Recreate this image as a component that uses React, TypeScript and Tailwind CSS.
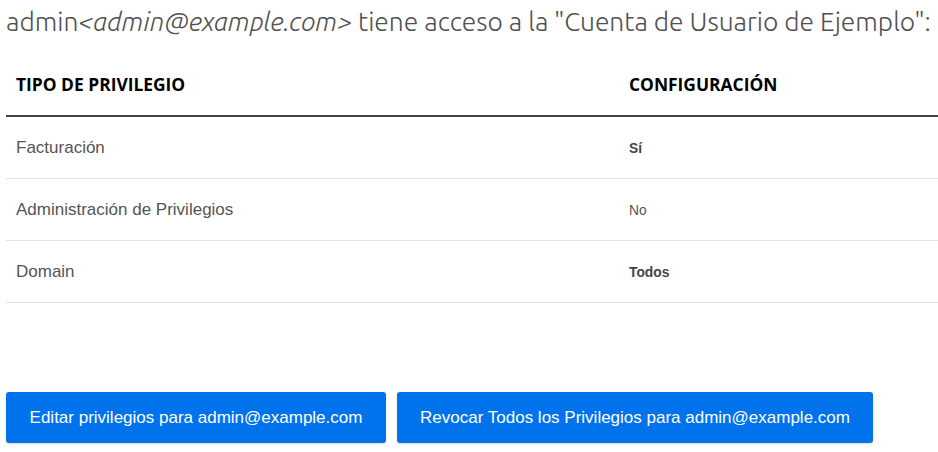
const rows = [
  { name: 'Facturación', value: 'Sí', bold: true },
  { name: 'Administración de Privilegios', value: 'No', bold: false },
  { name: 'Domain', value: 'Todos', bold: true },
];

export default function App() {
  return (
    <div className="w-[938px] h-[452px] bg-white pl-[6px] overflow-hidden">
      <h2 className="text-[26.4px] leading-[40px] pt-[1px] text-[#505050] font-light font-['Ubuntu','Open_Sans',sans-serif] whitespace-nowrap">
        admin<em>&lt;admin@example.com&gt;</em> tiene acceso a la "Cuenta de Usuario de Ejemplo":
      </h2>

      <div className="mt-[12px] font-['Open_Sans',sans-serif]">
        <div className="grid grid-cols-[613px_1fr] h-[64px] items-center border-b-2 border-[#3d4449] text-[17.4px] font-bold text-black">
          <div className="pl-[10px]">TIPO DE PRIVILEGIO</div>
          <div className="pl-[10px]">CONFIGURACIÓN</div>
        </div>
        {rows.map((r) => (
          <div key={r.name} className="grid grid-cols-[613px_1fr] h-[62px] items-center border-b border-[#e2e2e2] font-['Liberation_Sans',sans-serif]">
            <div className="pl-[10px] text-[17px] text-[#555]">{r.name}</div>
            <div className={`pl-[10px] pt-[4px] text-[13.8px] ${r.bold ? 'font-bold text-[#444]' : 'text-[#555]'}`}>{r.value}</div>
          </div>
        ))}
      </div>

      <div className="mt-[89px] flex gap-[11px] font-['Liberation_Sans',sans-serif]">
        <button className="h-[51px] w-[380px] rounded-[3px] bg-[#0073ec] text-white text-[17px] shadow-[0_1px_2px_rgba(0,0,0,0.15)]">
          Editar privilegios para admin@example.com
        </button>
        <button className="h-[51px] w-[476px] rounded-[3px] bg-[#0073ec] text-white text-[17px] shadow-[0_1px_2px_rgba(0,0,0,0.15)]">
          Revocar Todos los Privilegios para admin@example.com
        </button>
      </div>
    </div>
  );
}
